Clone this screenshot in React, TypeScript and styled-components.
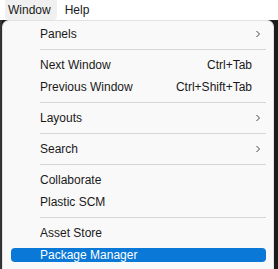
import React from 'react';
import styled, { createGlobalStyle } from 'styled-components';

const GlobalStyle = createGlobalStyle`
  html, body {
    margin: 0;
    padding: 0;
    width: 278px;
    height: 269px;
    overflow: hidden;
    background: #ffffff;
  }
  body {
    font-family: 'Liberation Sans', Arial, sans-serif;
    -webkit-font-smoothing: antialiased;
  }
`;

const Screen = styled.div`
  width: 278px;
  height: 269px;
  display: flex;
  flex-direction: column;
`;

const MenuBar = styled.div`
  height: 20px;
  display: flex;
  align-items: stretch;
  padding-left: 5px;
  background: #ffffff;
  font-size: 12px;
  color: #1a1a1a;
`;

const BarItem = styled.div<{ $active?: boolean }>`
  display: flex;
  align-items: center;
  padding: 0 6px 0 3px;
  margin-right: 5px;
  border-radius: 0 0 4px 4px;
  background: ${(p) => (p.$active ? '#f0f0f0' : 'transparent')};
`;

const Backdrop = styled.div`
  flex: 1;
  display: flex;
  background: linear-gradient(90deg, #3a3a3a 0px, #2a2a2a 2px, transparent 2px),
    #1c1c1c;
  padding-left: 2px;
  padding-right: 4px;
`;

const Panel = styled.div`
  flex: 1;
  background: #f9f9f9;
  border: 1px solid #e2e2e2;
  border-bottom: none;
  border-radius: 7px 7px 0 0;
  padding: 2px 7px 0 8px;
  font-size: 12px;
  color: #1a1a1a;
`;

const Item = styled.div<{ $selected?: boolean }>`
  height: 22px;
  display: flex;
  align-items: center;
  position: relative;
  padding: 0 14px 0 29px;
  color: ${(p) => (p.$selected ? '#ffffff' : '#1a1a1a')};

  &::before {
    content: '';
    position: absolute;
    left: 0;
    right: 0;
    top: 4px;
    bottom: 4px;
    border-radius: 4px;
    background: ${(p) => (p.$selected ? '#0a78d6' : 'transparent')};
  }
`;

const Label = styled.span`
  position: relative;
  flex: 1;
`;

const Shortcut = styled.span`
  position: relative;
`;

const Chevron = styled.svg`
  position: relative;
  margin-right: -10px;
`;

const Separator = styled.div`
  height: 9px;
  display: flex;
  align-items: center;
  padding-left: 29px;

  &::after {
    content: '';
    flex: 1;
    height: 1px;
    background: #d6d6d6;
  }
`;

type Entry =
  | { kind: 'sep' }
  | { kind: 'item'; label: string; shortcut?: string; sub?: boolean; selected?: boolean };

const entries: Entry[] = [
  { kind: 'item', label: 'Panels', sub: true },
  { kind: 'sep' },
  { kind: 'item', label: 'Next Window', shortcut: 'Ctrl+Tab' },
  { kind: 'item', label: 'Previous Window', shortcut: 'Ctrl+Shift+Tab' },
  { kind: 'sep' },
  { kind: 'item', label: 'Layouts', sub: true },
  { kind: 'sep' },
  { kind: 'item', label: 'Search', sub: true },
  { kind: 'sep' },
  { kind: 'item', label: 'Collaborate' },
  { kind: 'item', label: 'Plastic SCM' },
  { kind: 'sep' },
  { kind: 'item', label: 'Asset Store' },
  { kind: 'item', label: 'Package Manager', selected: true },
];

const App = () => {
  return (
    <>
      <GlobalStyle />
      <Screen>
        <MenuBar>
          <BarItem $active>Window</BarItem>
          <BarItem>Help</BarItem>
        </MenuBar>
        <Backdrop>
          <Panel>
            {entries.map((e, i) =>
              e.kind === 'sep' ? (
                <Separator key={i} />
              ) : (
                <Item key={i} $selected={e.selected}>
                  <Label>{e.label}</Label>
                  {e.shortcut && <Shortcut>{e.shortcut}</Shortcut>}
                  {e.sub && (
                    <Chevron width="8" height="10" viewBox="0 0 8 10">
                      <path d="M2.5 2 L5.5 5 L2.5 8" fill="none" stroke="#444" strokeWidth="1" />
                    </Chevron>
                  )}
                </Item>
              )
            )}
          </Panel>
        </Backdrop>
      </Screen>
    </>
  );
};

export default App;
